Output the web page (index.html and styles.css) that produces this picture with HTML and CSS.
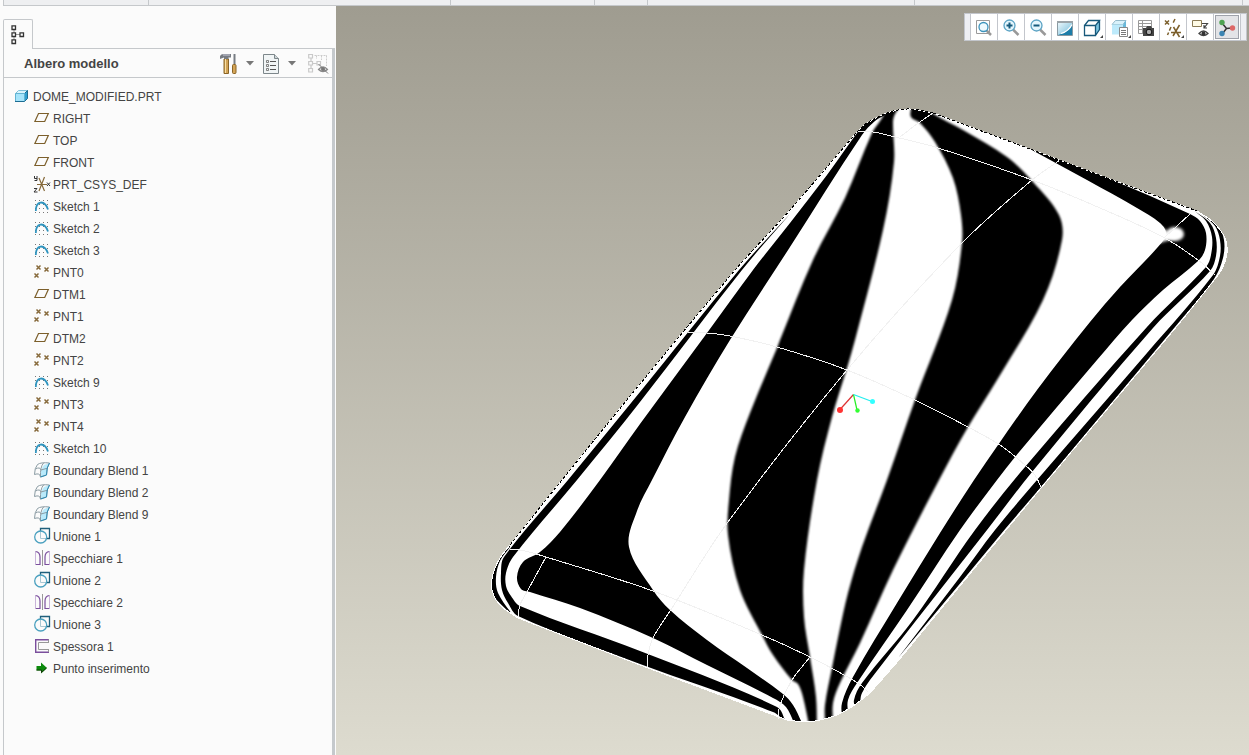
FILE: index.html
```
<!DOCTYPE html>
<html lang="it">
<head>
    <meta charset="UTF-8">
    <title>DOME_MODIFIED.PRT</title>
    <link rel="stylesheet" href="styles.css">
</head>
<body>
    <!-- icon library -->
    <svg class="symbols" aria-hidden="true">
        <symbol id="part" viewBox="0 0 16 16">
            <path d="M1.5 4.5L4.5 1.5H13.5L10.5 4.5Z" fill="#d8f4fd" stroke="#7fc0da"/>
            <path d="M10.5 4.5L13.5 1.5V9.5L10.5 12.5Z" fill="#2e9fd0" stroke="#1d6c92"/>
            <path d="M1.5 4.5H10.5V12.5H1.5Z" fill="#a5e4fb" stroke="#62b3d2"/>
            <path d="M1 12.5H10.5" stroke="#1d6c92"/>
        </symbol>
        <symbol id="plane" viewBox="0 0 16 16">
            <path d="M4.5 2.5H14.3L10.7 10.5H.9Z" fill="none" stroke="#7c5f2b" stroke-width="1.2"/>
        </symbol>
        <symbol id="csys" viewBox="0 0 16 16">
            <path d="M3 7.5H13M5 1L10.5 14M10.5 0L5 14" fill="none" stroke="#86693a" stroke-width="1.2"/>
            <path d="M.5 -1V1.5H3M3 -1V3.5H.5M0 11.500H3L0 15H3.500M13 5.500L16 9M16 5.500L13 9" fill="none" stroke="#333"/>
        </symbol>
        <symbol id="sketch" viewBox="0 0 16 16">
            <path d="M1 1.5H15M1 5.5H15M1 9.5H15M1 13.5H15" stroke="#777" stroke-dasharray="1 3" fill="none"/>
            <path d="M1.8 12C1.8 1.5 10.5 .5 14 10.5" fill="none" stroke="#2d93be" stroke-width="1.8"/>
        </symbol>
        <symbol id="point" viewBox="0 0 16 16">
            <path d="M2.5 .5L6.5 4.5M6.5 .5L2.5 4.5M10.5 2.5L14.5 6.5M14.5 2.5L10.5 6.5M.5 8.5L4.5 12.5M4.5 8.5L.5 12.5" stroke="#86693a" stroke-width="1.5" fill="none"/>
        </symbol>
        <symbol id="blend" viewBox="0 0 16 16">
            <path d="M10 2L15.5 0C13 4 13 8 12.5 11.5L6.5 14C6.5 9 7.5 5 10 2Z" fill="#b9eafb"/>
            <path d="M3.5 1.5Q7 -1 15.5 0Q12.5 4 12.5 12L6.5 14Q6 9.5 .5 11.5Q.5 5 3.5 1.5Z" fill="none" stroke="#8a9ba3"/>
            <path d="M1.5 6Q6 3.5 7 7L14 5M9.5 0Q6 4 6.5 14" fill="none" stroke="#8a9ba3"/>
            <path d="M15.5 0Q12.5 4 12.5 12L6.5 14" fill="none" stroke="#2b8bb5"/>
        </symbol>
        <symbol id="union" viewBox="0 0 16 16">
            <path d="M6.5 2V-.5H15.5V9.5H13" fill="none" stroke="#1f5f7c" stroke-width="1.3"/>
            <path d="M6.5 2V9.5H13" fill="none" stroke="#a9c8d4"/>
            <circle cx="6.7" cy="8" r="6" fill="none" stroke="#4aa0bf" stroke-width="1.3"/>
        </symbol>
        <symbol id="mirror" viewBox="0 0 16 16">
            <path d="M8.5 -1V15" stroke="#999"/>
            <path d="M1.5 .5Q6 1 6 6V13.5H1.5M15.5 .5Q11 1 11 6V13.5H15.5" fill="none" stroke="#7b4f9d" stroke-width="1.2"/>
            <path d="M1.5 1V13.5M15.5 1V13.5" stroke="#c9b3d9"/>
        </symbol>
        <symbol id="thicken" viewBox="0 0 16 16">
            <path d="M15 .7H1.7V13.3H15" fill="none" stroke="#7b4f9d" stroke-width="1.4"/>
            <path d="M15 3.5H4.5V10.5H15M14.5 .5V3.5M14.5 10.5V13" fill="none" stroke="#999"/>
        </symbol>
        <symbol id="insert" viewBox="0 0 16 16">
            <path d="M2.5 5H7V1.5L13 7L7 12.5V9.500H2.500Z" fill="#0c8a0c"/>
            <path d="M2.500 9H7.500V11.500L12.500 7" fill="none" stroke="#143c0a"/>
        </symbol>
    </svg>

    <div class="ribbon"><span></span><span></span><span></span><span></span><span></span><span></span></div>

    <div class="workspace">
        <aside class="sidebar">
            <div class="tabs">
                <button class="tab" aria-label="Albero modello">
                    <svg width="14" height="20" viewBox="0 0 14 20"><path d="M3 5V15M5 9.5H9" stroke="#999"/><path d="M1 .8H4.5V4.5H1ZM1 7.8H4.5V11.5H1ZM1 14.8H4.5V18.5H1ZM9 7.8H12.5V11.5H9Z" fill="#fff" stroke="#333" stroke-width="1.3"/></svg>
                </button>
            </div>
            <div class="panel">
                <div class="panel-head">
                    <h1>Albero modello</h1>
                    <button class="tools" aria-label="Impostazioni">
                        <svg width="18" height="22" viewBox="0 0 18 22">
                            <path d="M4 6H8.5V20.5H4Z" fill="#d3a456" stroke="#8a6426"/><path d="M5.5 6V20" stroke="#f7dfa5"/>
                            <path d="M0 3Q1 1 3.5 1H11V4.5H8.5V6H4V4.5L0 6Z" fill="#777c83"/><path d="M3 2H10" stroke="#ccd"/>
                            <path d="M14.5 1V11" stroke="#777c83" stroke-width="2"/><rect x="12.5" y="11.5" width="3.5" height="9" rx="1" fill="#d3a456" stroke="#8a6426"/>
                        </svg>
                    </button>
                    <button class="caret" aria-label="Menu impostazioni"><svg width="8" height="5"><path d="M0 0H8L4 4.5Z" fill="#777"/></svg></button>
                    <button class="list" aria-label="Mostra">
                        <svg width="17" height="22" viewBox="0 0 17 22">
                            <path d="M.5 1.5H11.5L15.5 5.5V20.5H.5Z" fill="#f1f5f6" stroke="#7d878b"/><path d="M11.5 1.5V5.5H15.5" fill="#cdd5d8" stroke="#7d878b"/>
                            <path d="M7 8.5H13M7 12.5H13M7 16.5H13" stroke="#555"/><path d="M3.5 7.5h2v2h-2zM3.5 11.5h2v2h-2zM3.5 15.5h2v2h-2z" fill="none" stroke="#666" stroke-width=".8"/>
                        </svg>
                    </button>
                    <button class="caret" aria-label="Menu mostra"><svg width="8" height="5"><path d="M0 0H8L4 4.5Z" fill="#777"/></svg></button>
                    <button class="hide" aria-label="Nascondi" disabled>
                        <svg width="21" height="22" viewBox="0 0 21 22">
                            <path d="M.7 1.5H4.5V5H.7ZM.7 8.5H4.5V12H.7ZM.7 15.5H4.5V19H.7ZM9 8.5H12.5V12H9ZM5 10.5H9M3 5V8.5M3 12V15.5" fill="none" stroke="#c9c9c9" stroke-width="1.2"/>
                            <path d="M6.5 2.5H19M8.5 2.5V6M13.5 2.5V7M18.5 2.5V13" fill="none" stroke="#ccc" stroke-dasharray="2 1"/>
                            <path d="M10.5 16.5Q15 11 19.5 16.5Q15 20.5 10.5 16.5Z" fill="#ddd" stroke="#888" stroke-width="1.2"/><circle cx="15" cy="16" r="2" fill="#777"/><path d="M10.5 11L20 20.5" stroke="#777"/>
                        </svg>
                    </button>
                </div>
                <ul class="tree">
                    <li class="root"><svg><use href="#part"/></svg>DOME_MODIFIED.PRT</li>
                    <li><svg><use href="#plane"/></svg>RIGHT</li>
                    <li><svg><use href="#plane"/></svg>TOP</li>
                    <li><svg><use href="#plane"/></svg>FRONT</li>
                    <li><svg><use href="#csys"/></svg>PRT_CSYS_DEF</li>
                    <li><svg><use href="#sketch"/></svg>Sketch 1</li>
                    <li><svg><use href="#sketch"/></svg>Sketch 2</li>
                    <li><svg><use href="#sketch"/></svg>Sketch 3</li>
                    <li><svg><use href="#point"/></svg>PNT0</li>
                    <li><svg><use href="#plane"/></svg>DTM1</li>
                    <li><svg><use href="#point"/></svg>PNT1</li>
                    <li><svg><use href="#plane"/></svg>DTM2</li>
                    <li><svg><use href="#point"/></svg>PNT2</li>
                    <li><svg><use href="#sketch"/></svg>Sketch 9</li>
                    <li><svg><use href="#point"/></svg>PNT3</li>
                    <li><svg><use href="#point"/></svg>PNT4</li>
                    <li><svg><use href="#sketch"/></svg>Sketch 10</li>
                    <li><svg><use href="#blend"/></svg>Boundary Blend 1</li>
                    <li><svg><use href="#blend"/></svg>Boundary Blend 2</li>
                    <li><svg><use href="#blend"/></svg>Boundary Blend 9</li>
                    <li><svg><use href="#union"/></svg>Unione 1</li>
                    <li><svg><use href="#mirror"/></svg>Specchiare 1</li>
                    <li><svg><use href="#union"/></svg>Unione 2</li>
                    <li><svg><use href="#mirror"/></svg>Specchiare 2</li>
                    <li><svg><use href="#union"/></svg>Unione 3</li>
                    <li><svg><use href="#thicken"/></svg>Spessora 1</li>
                    <li><svg><use href="#insert"/></svg>Punto inserimento</li>
                </ul>
            </div>
        </aside>

        <main class="viewport">
            <svg class="model" viewBox="336 6 913 749" preserveAspectRatio="xMinYMin slice" role="img" aria-label="Modello 3D">
                <defs>
                    <clipPath id="bodyClip"><path id="clipShape"/></clipPath>
                    <filter id="soft" x="-5%" y="-5%" width="110%" height="110%"><feGaussianBlur stdDeviation="1"/></filter>
                    <filter id="glow" x="-30%" y="-30%" width="160%" height="160%"><feGaussianBlur stdDeviation="1.5"/></filter>
                </defs>
                <path id="body" fill="#fff"/>
                <g clip-path="url(#bodyClip)">
                    <g id="softStripes" filter="url(#soft)"></g>
                    <g id="stripes"></g>
                    <ellipse cx="1175" cy="234" rx="9" ry="7" fill="#fff" filter="url(#glow)"/>
                    <path d="M1148 218L1164 229L1176 238L1156 244Z" fill="#fff" filter="url(#glow)"/>
                </g>
                <g id="edges" fill="none" stroke="#f1f1f1" shape-rendering="crispEdges"></g>
                <g id="silhouette" fill="none" shape-rendering="crispEdges"></g>
                <!-- spin center -->
                <g fill="none" stroke-width="1.2">
                    <path d="M853.5 394.5L840 409.5" stroke="#d33"/><path d="M853.5 394.5L857 410" stroke="#2e2"/><path d="M853.5 394.5L872 401.5" stroke="#2ee"/>
                </g>
                <circle cx="840" cy="410" r="3" fill="#f33"/><circle cx="857.5" cy="410.5" r="2.2" fill="#3f3"/><circle cx="872.5" cy="401.5" r="2.5" fill="#3ff"/>
            </svg>

            <div class="toolbar">
                <button aria-label="Adatta"><svg viewBox="0 0 26 25"><path d="M5.5 5.5H18.5V18.5H5.5Z" fill="#fff" stroke="#9a9a9a"/><path d="M15.5 15.5L20 20" stroke="#999" stroke-width="2.5"/><circle cx="12.5" cy="12" r="4.5" fill="#eefaff" stroke="#3b93bc" stroke-width="1.3"/></svg></button>
                <button aria-label="Ingrandisci"><svg viewBox="0 0 26 25"><path d="M15 14.5L20.5 20" stroke="#999" stroke-width="2.5"/><circle cx="11.5" cy="10.5" r="5.5" fill="#e4f6fd" stroke="#5ba3c4" stroke-width="1.3"/><path d="M8.5 10.5H14.5M11.5 7.5V13.5" stroke="#155a7c" stroke-width="2"/></svg></button>
                <button aria-label="Riduci"><svg viewBox="0 0 26 25"><path d="M15 14.5L20.5 20" stroke="#999" stroke-width="2.5"/><circle cx="11.5" cy="10.5" r="5.5" fill="#e4f6fd" stroke="#5ba3c4" stroke-width="1.3"/><path d="M8.5 10.5H14.5" stroke="#155a7c" stroke-width="2"/></svg></button>
                <button aria-label="Ridisegna"><svg viewBox="0 0 26 25"><defs><linearGradient id="pg" x2="1" y2="1"><stop offset="0" stop-color="#f2fafd"/><stop offset="1" stop-color="#6db9d8"/></linearGradient></defs><path d="M5.5 6.5H20.5V20.5H5.5Z" fill="url(#pg)" stroke="#8a9aa2"/><path d="M5 7H21" stroke="#9aa3a8" stroke-width="2"/><path d="M6 20L12 18Q18 15 20 9V20Z" fill="#1d7da8"/><path d="M9 18.500Q17 16 20 9.500" fill="none" stroke="#fff" stroke-width="1.300"/></svg></button>
                <button aria-label="Stile visualizzazione"><svg viewBox="0 0 26 25"><path d="M5.5 10.5L9.5 5.5H20.5V14.5L16.5 20.5H5.5Z" fill="#fff"/><path d="M16.5 10.5L20.5 5.5V14.5L16.5 20.5Z" fill="#7cc4e0"/><path d="M5.5 10.5H16.5V20.5H5.5ZM5.5 10.5L9.5 5.5H20.5L16.5 10.5M20.5 5.5V14.5L16.5 20.5" fill="none" stroke="#17587a" stroke-width="1.3"/><path d="M24 20V23H21Z" fill="#444"/></svg></button>
                <button aria-label="Orientamenti salvati"><svg viewBox="0 0 26 25"><path d="M6 9.5L9.5 5.5H20L17 9.5Z" fill="#d9f2fb" stroke="#93b9c9"/><path d="M6 9.5H17V19.5H6Z" fill="#bdeafb"/><path d="M17 9.5L20 5.5V12H17Z" fill="#6ab9da"/><path d="M13.5 12.5H21.5V21.5H13.5Z" fill="#fff" stroke="#888"/><path d="M15 15.5H20M15 17.5H20M15 19.5H20" stroke="#777"/><path d="M25 20V23H22Z" fill="#444"/></svg></button>
                <button aria-label="Gestione viste"><svg viewBox="0 0 26 25"><path d="M5.5 5.5H18.5V18.5H5.5ZM5.5 8.5H18.5M5.5 11.5H18.5M5.5 14.5H18.5M9.5 5.5V18.5" fill="#fff" stroke="#999"/><path d="M10 13H13L14 11H18L19 13H21V21H10Z" fill="#444"/><circle cx="16" cy="17" r="2.8" fill="#aaa" stroke="#111"/></svg></button>
                <button aria-label="Filtri visualizzazione riferimenti"><svg viewBox="0 0 26 25"><path d="M5 5.5L9 9.5M9 5.5L5 9.5" stroke="#7c5f2b" stroke-width="1.5"/><path d="M15 4L12.5 9M11 12L7.5 20" stroke="#7c5f2b" stroke-width="1.5" stroke-dasharray="4 2"/><path d="M11 17.5H21M13.5 12L19.5 22M19.5 10L13 21" stroke="#7c5f2b" stroke-width="1.5"/><path d="M24 20V23H21Z" fill="#444"/></svg></button>
                <button aria-label="Visualizza annotazioni"><svg viewBox="0 0 26 25"><path d="M5.5 5.5H14.5V11.5H5.5Z" fill="#fffbe6" stroke="#8a7a55"/><path d="M15 8.5H20.5L17.5 12.5M17 10V13H20" fill="none" stroke="#444" stroke-width="1.2"/><path d="M12 18.5Q16.5 13.5 21 18.5Q16.5 22.5 12 18.5Z" fill="#fff" stroke="#444" stroke-width="1.3"/><circle cx="16.5" cy="18.5" r="2" fill="#333"/></svg></button>
                <button class="pressed" aria-label="Centro di rotazione"><svg viewBox="0 0 26 25"><path d="M8 8L12.5 13.5L18 13M12.5 13.5L8.5 18.5" fill="none" stroke="#333" stroke-width="1.5"/><circle cx="8" cy="7.5" r="2.7" fill="#4ea352"/><circle cx="18.5" cy="13" r="2.7" fill="#dd6867"/><circle cx="8" cy="18.5" r="2.7" fill="#3b85b3"/></svg></button>
            </div>
        </main>
    </div>
    <script src="model.js"></script>
</body>
</html>
```
FILE: styles.css
```
* {
    box-sizing: border-box;
}

body {
    margin: 0;
    height: 100vh;
    display: flex;
    flex-direction: column;
    background: #fbfbfb;
    color: #444;
    font: 12px/22px "Liberation Sans", Arial, sans-serif;
    overflow: hidden;
}

button {
    margin: 0;
    padding: 0;
    border: none;
    background: none;
    display: flex;
    align-items: center;
    justify-content: center;
}

.symbols {
    display: none;
}

.ribbon {
    flex: none;
    height: 6px;
    margin-left: 3px;
    display: grid;
    grid-template-columns: 145fr 302fr 144fr 54fr 267fr 328fr 6px;
    background: #eeeff1;
    border-bottom: 1px solid #c5c8cb;
    border-left: 1px solid #c5c8cb;
}

.ribbon span {
    border-right: 1px solid #c5c8cb;
}

.workspace {
    flex: 1;
    min-height: 0;
    display: flex;
}

/* model tree */
.sidebar {
    flex: none;
    width: 336px;
    padding: 13px 1px 0 3px;
    display: flex;
    flex-direction: column;
}

.tab {
    position: relative;
    width: 30px;
    height: 30px;
    margin-bottom: -1px;
    border: 1px solid #c5c8cb;
    border-bottom: none;
    border-radius: 2px 2px 0 0;
    background: #fbfbfb;
}

.panel {
    flex: 1;
    border: 1px solid #c5c8cb;
    border-right: 3px solid #c5c9cc;
    border-bottom: none;
}

.panel-head {
    height: 29px;
    padding: 1px 3px 0 20px;
    display: flex;
    align-items: center;
    border-bottom: 1px solid #c5c8cb;
}

.panel-head h1 {
    flex: 1;
    margin: 0;
    font-size: 13px;
}

.caret {
    margin: 0 9px 0 8px;
}

.hide {
    margin-left: 3px;
}

.tree {
    list-style: none;
    margin: 0;
    padding: 8px 0 0 30px;
}

.tree li {
    display: flex;
    align-items: center;
    gap: 3px;
    height: 22px;
    white-space: nowrap;
}

.tree .root {
    margin-left: -20px;
}

.tree svg {
    flex: none;
    width: 16px;
    height: 16px;
    overflow: visible;
}

.symbols symbol {
    overflow: visible;
}

/* graphics area */
.viewport {
    position: relative;
    flex: 1;
    min-width: 0;
    background: linear-gradient(#9f9c90, #dddbcf);
}

.model {
    display: block;
    width: 100%;
    height: 100%;
}

.toolbar {
    position: absolute;
    top: 7px;
    right: 2px;
    display: flex;
    padding: 0 5px;
    background: #eeeff3;
    border: 1px solid #c3c6cc;
}

.toolbar button {
    width: 27px;
    height: 26px;
    background: #fff;
    border-right: 1px solid #c3c6cc;
}

.toolbar button:first-child {
    width: 28px;
    border-left: 1px solid #c3c6cc;
}

.toolbar svg {
    width: 26px;
    height: 25px;
}

.toolbar .pressed {
    background: #e3e4e7;
    box-shadow: inset 0 0 0 1px #fff, inset 0 0 0 2px #9ea2aa;
}
```
FILE: model.js
```
const NS = 'http://www.w3.org/2000/svg';

// handle at point b, one third of the chord long, parallel to a-c
function handle(a, b, c, len) {
    const dx = c[0] - a[0], dy = c[1] - a[1];
    const n = Math.hypot(dx, dy) || 1;
    return [b[0] + dx / n * len / 3, b[1] + dy / n * len / 3];
}

// smooth curve through the section points
function curve(p) {
    let d = '';
    for (let i = 0; i < p.length - 1; i++) {
        const a = p[i - 1] || p[i], b = p[i], c = p[i + 1], e = p[i + 2] || c;
        const len = Math.hypot(c[0] - b[0], c[1] - b[1]);
        d += `C${handle(a, b, c, len)} ${handle(e, c, b, len)} ${c}`;
    }
    return d;
}

function open(p) {
    return `M${p[0]}` + curve(p);
}

function band(left, right) {
    const r = right.slice().reverse();
    return open(left) + `L${r[0]}` + curve(r) + 'Z';
}

function add(parent, d, attrs = {}) {
    const path = document.createElementNS(NS, 'path');
    path.setAttribute('d', d);
    for (const k in attrs) path.setAttribute(k, attrs[k]);
    document.getElementById(parent).appendChild(path);
}

const leftSide = [[510, 545], [562, 480], [640, 384], [737, 268], [790, 210], [857, 132]];
const topLeft = [[857, 132], [867, 123], [890, 112], [910, 109], [933, 113]];
const topSide = [[933, 113], [1030, 149], [1110, 179], [1197, 211]];
const rightCorner = [[1197, 211], [1213, 222], [1225, 238], [1227, 253], [1222, 269], [1215, 279]];
const rightSide = [[1215, 279], [1182, 320], [1041, 488], [1006, 530], [898, 661], [870, 693]];
const bottomCorner = [[870, 693], [853, 706], [837, 715], [820, 720], [807, 722], [787, 720]];
const bottomSide = [[787, 720], [648, 668], [518, 618]];
const leftCorner = [[518, 618], [500, 605], [492, 590], [493, 574], [500, 558], [510, 545]];

const outline = open(leftSide) + [topLeft, topSide, rightCorner, rightSide, bottomCorner, bottomSide, leftCorner].map(curve).join('') + 'Z';
document.getElementById('body').setAttribute('d', outline);
document.getElementById('clipShape').setAttribute('d', outline);

const softBands = [
    [
        [[888, 105], [882, 118], [872, 133], [845, 198], [813, 260], [780, 340], [777, 348], [750, 413], [735, 457], [729, 500], [728, 535], [740, 590], [762, 635], [773, 655], [792, 680], [798, 684], [803, 697], [810, 730]],
        [[902, 105], [895, 114], [893, 122], [894, 162], [883, 230], [855, 340], [847, 368], [832, 417], [817, 480], [804, 570], [804, 617], [810, 657], [816, 697], [817, 730]]
    ],
    [
        [[911, 108], [911, 117], [920, 123], [935, 142], [953, 178], [961, 215], [962, 243], [952, 300], [915, 400], [887, 480], [862, 547], [848, 593], [839, 633], [832, 668], [825, 705], [825, 725]],
        [[925, 105], [932, 113], [963, 130], [1007, 157], [1033, 182], [1059, 215], [1062, 240], [1043, 300], [997, 380], [968, 427], [939, 480], [893, 570], [860, 643], [840, 683], [833, 703], [833, 725]]
    ]
];

const bands = [
    // lower left field, up the left side
    [
        [[885, 112], [867, 121], [857, 133], [827, 175], [790, 223], [753, 270], [707, 333], [640, 424], [600, 480], [560, 532], [540, 552], [523, 562], [517, 577], [521, 589], [530, 592], [580, 608], [653, 638], [707, 665], [773, 698], [786, 707], [795, 725]],
        [[885, 115], [875, 121], [862, 135], [790, 247], [730, 340], [685, 417], [652, 480], [637, 511], [629, 547], [653, 590], [670, 610], [707, 640], [747, 668], [783, 694], [793, 705], [803, 725]]
    ],
    [
        [[790, 214], [739, 270], [640, 392], [568, 480], [504, 557], [501, 573], [502, 590], [508, 603], [518, 616], [640, 664], [773, 712], [786, 722]],
        [[790, 214], [742, 270], [640, 402], [577, 480], [513, 557], [506, 573], [506, 586], [511, 596], [520, 606], [640, 651], [777, 707], [786, 722]]
    ],
    [
        [[510, 544], [499, 558], [491, 574], [491, 592], [514, 617]],
        [[510, 547], [500, 561], [496, 577], [498, 593], [514, 617]]
    ],
    // upper right field, down the right side
    [
        [[1030, 149], [1087, 180], [1137, 208], [1160, 223], [1166, 234], [1157, 248], [1120, 287], [1090, 322], [1037, 390], [998, 445], [974, 480], [940, 533], [897, 603], [853, 677], [842, 703], [842, 720]],
        [[1030, 148], [1110, 179], [1190, 214], [1200, 221], [1206, 233], [1205, 250], [1198, 261], [1163, 290], [1132, 320], [1097, 360], [1015, 457], [997, 480], [960, 530], [907, 610], [857, 683], [848, 700], [848, 715]]
    ],
    [
        [[1193, 210], [1206, 221], [1212, 237], [1211, 255], [1206, 267], [1147, 327], [1025, 467], [975, 530], [913, 620], [862, 683], [854, 700], [856, 712]],
        [[1193, 210], [1210, 223], [1216, 238], [1216, 256], [1210, 271], [1153, 328], [1032, 472], [987, 530], [940, 590], [880, 667], [862, 693], [860, 708]]
    ],
    [
        [[1203, 215], [1215, 226], [1220, 240], [1220, 256], [1213, 275], [1147, 353], [1037, 480], [995, 530], [960, 577], [898, 658]],
        [[1203, 215], [1218, 226], [1224, 240], [1223, 258], [1214, 279], [1180, 321], [1041, 487], [1006, 528], [963, 580], [898, 658]]
    ]
];

softBands.forEach(b => add('softStripes', band(b[0], b[1])));
bands.forEach(b => add('stripes', band(b[0], b[1])));

// patch boundaries
[
    [[857, 132], [873, 132], [895, 137], [935, 147], [1032, 180], [1100, 208], [1163, 237], [1198, 260], [1215, 275]],
    [[1190, 214], [1165, 237]],
    [[933, 113], [917, 124], [900, 137]],
    [[1060, 160], [1032, 180], [960, 245], [847, 370], [728, 522], [672, 608], [653, 638], [648, 655], [648, 667]],
    [[688, 333], [707, 333], [730, 336], [777, 347], [847, 370], [915, 400], [968, 427], [1000, 445], [1025, 465], [1035, 475], [1041, 487]],
    [[510, 549], [525, 551], [546, 557], [653, 591], [762, 635], [810, 657], [858, 683], [868, 692]],
    [[546, 557], [528, 590], [520, 605], [518, 617]],
    [[810, 657], [792, 680], [780, 705], [778, 719]]
].forEach(p => add('edges', open(p)));

// jagged black and white silhouette
[leftSide, topLeft, topSide].forEach(p => {
    add('silhouette', open(p), { stroke: '#fff' });
    add('silhouette', open(p), { stroke: '#000', 'stroke-dasharray': '3 2' });
});
[rightCorner, rightSide, bottomCorner, bottomSide, leftCorner].forEach(p => add('silhouette', open(p), { stroke: '#fff' }));
```
